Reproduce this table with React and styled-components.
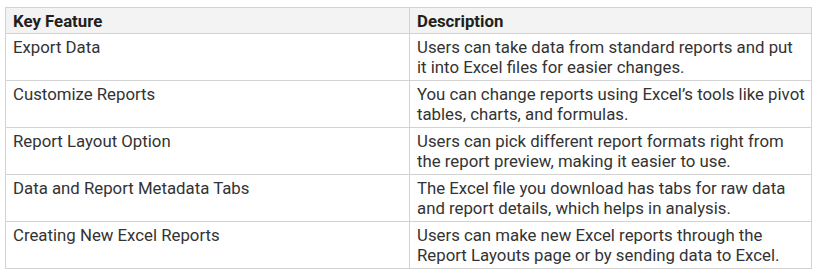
import React from 'react'
import styled, { createGlobalStyle } from 'styled-components'

const rows = [
  ['Export Data', 'Users can take data from standard reports and put it into Excel files for easier changes.'],
  ['Customize Reports', 'You can change reports using Excel\u2019s tools like pivot tables, charts, and formulas.'],
  ['Report Layout Option', 'Users can pick different report formats right from the report preview, making it easier to use.'],
  ['Data and Report Metadata Tabs', 'The Excel file you download has tabs for raw data and report details, which helps in analysis.'],
  ['Creating New Excel Reports', 'Users can make new Excel reports through the Report Layouts page or by sending data to Excel.'],
]

const GlobalStyle = createGlobalStyle`
  body {
    margin: 0;
    background: #ffffff;
    font-family: Roboto, "Liberation Sans", sans-serif;
  }
`

const Wrap = styled.div`
  padding: 7px 0 0 5px;
`

const Table = styled.table`
  width: 807px;
  border-collapse: collapse;
  table-layout: fixed;
  font-size: 16.8px;
  line-height: 20px;
  color: #333333;
`

const Head = styled.th`
  background: #f3f3f3;
  border: 1px solid #d2d2d2;
  padding: 3px 5px 2px 7px;
  text-align: left;
  font-weight: 700;
  color: #1f1f1f;
  height: 20px;
`

const Cell = styled.td`
  border: 1px solid #d2d2d2;
  padding: 3px 5px 3px 7px;
  vertical-align: top;
  height: 40px;
`

export default function App() {
  return (
    <>
      <GlobalStyle />
      <Wrap>
        <Table>
          <colgroup>
            <col style={{ width: 404 }} />
            <col />
          </colgroup>
          <thead>
            <tr>
              <Head>Key Feature</Head>
              <Head>Description</Head>
            </tr>
          </thead>
          <tbody>
            {rows.map(([feature, desc]) => (
              <tr key={feature}>
                <Cell>{feature}</Cell>
                <Cell>{desc}</Cell>
              </tr>
            ))}
          </tbody>
        </Table>
      </Wrap>
    </>
  )
}
